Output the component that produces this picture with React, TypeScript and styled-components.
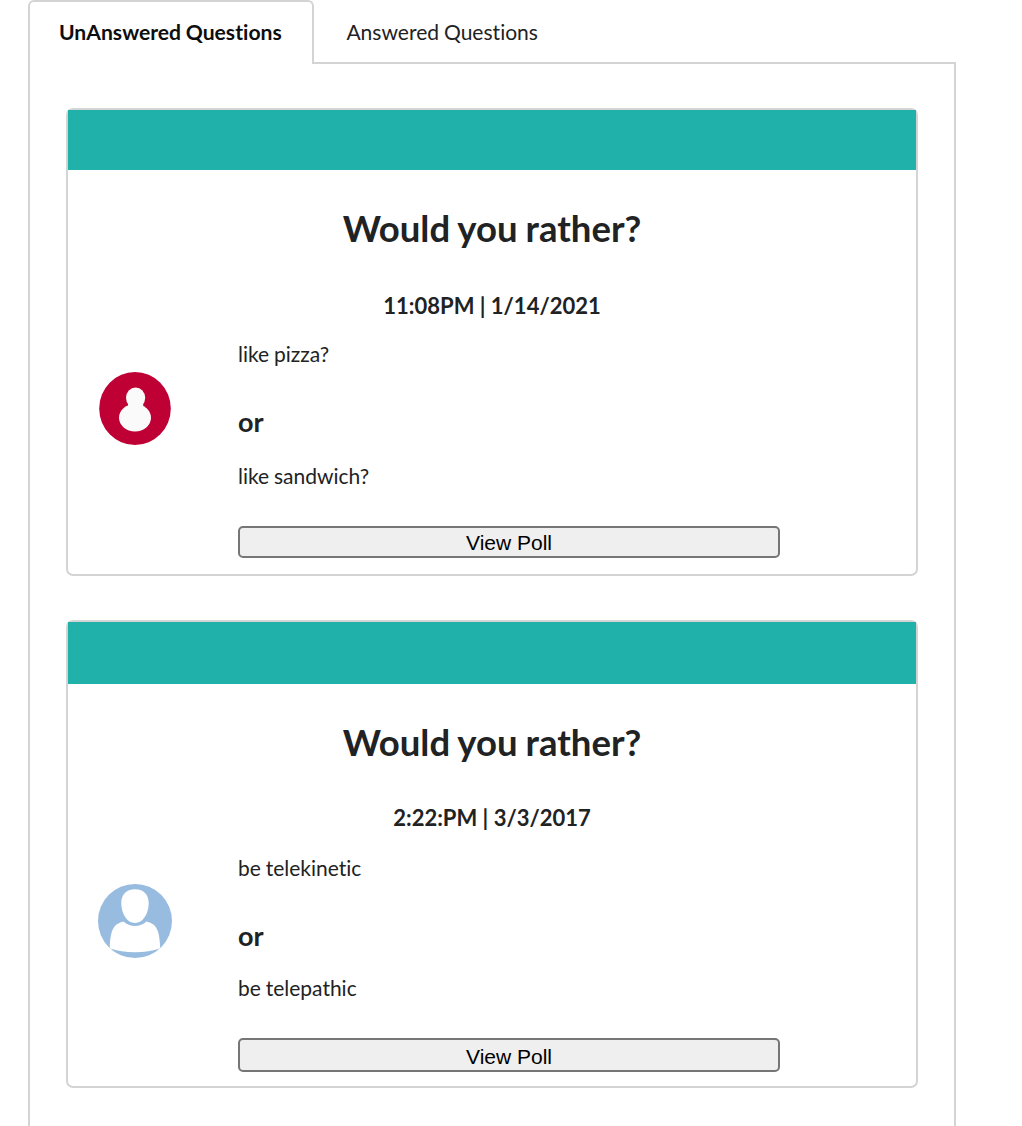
import React from "react";
import styled, { createGlobalStyle } from "styled-components";

const GlobalStyle = createGlobalStyle`
  * { box-sizing: border-box; }
  body {
    margin: 0;
    height: 1126px;
    overflow: hidden;
    background: #fff;
    color: #212223;
    font-family: Lato, "Liberation Sans", sans-serif;
    font-size: 21px;
    font-variant-ligatures: none;
    word-spacing: -0.025em;
  }
`;

const Page = styled.main`
  width: 928px;
  height: 1126px;
  margin-left: 28px;
  overflow: hidden;
`;

const TabBar = styled.nav`
  display: flex;
  height: 64px;
  border-bottom: 2px solid #d4d4d5;
`;

const Tab = styled.a<{ $active?: boolean }>`
  height: 64px;
  line-height: 30px;
  padding: ${(p) => (p.$active ? "15px 0 0 29px" : "17px 0 0 32.4px")};
  width: ${(p) => (p.$active ? "286px" : "240px")};
  white-space: nowrap;
  color: ${(p) => (p.$active ? "#0d0e0f" : "#212223")};
  font-size: ${(p) => (p.$active ? "21.15px" : "21.05px")};
  font-weight: ${(p) => (p.$active ? 700 : 400)};
  ${(p) =>
    p.$active &&
    `
    background: #fff;
    border: 2px solid #d4d4d5;
    border-bottom: 0;
    border-radius: 6px 6px 0 0;
  `}
`;

const Panel = styled.section`
  display: flex;
  flex-direction: column;
  gap: 44px;
  height: 1100px;
  padding: 44px 36px 0;
  border: 2px solid #d4d4d5;
  border-top: 0;
`;

const Card = styled.article`
  flex: none;
  height: 468px;
  border: 2px solid #d4d4d5;
  border-radius: 7px;
`;

const Banner = styled.div<{ $height: number }>`
  height: ${(p) => p.$height}px;
  background: #20b2aa;
`;

const Title = styled.h1<{ $height: number }>`
  margin: 0;
  padding-top: 36px;
  height: ${(p) => p.$height}px;
  line-height: 44px;
  font-size: 36.5px;
  word-spacing: -0.8px;
  font-weight: 700;
  text-align: center;
`;

const Timestamp = styled.h3<{ $height: number }>`
  margin: 0;
  height: ${(p) => p.$height}px;
  line-height: 36px;
  font-size: 22px;
  word-spacing: 0;
  font-weight: 700;
  text-align: center;
`;

const Body = styled.div`
  display: grid;
  grid-template-columns: 134px 542px;
  column-gap: 36px;
`;

const AvatarCell = styled.div<{ $top: number }>`
  display: flex;
  justify-content: center;
  padding-top: ${(p) => p.$top}px;
`;

const Choices = styled.div`
  display: flex;
  flex-direction: column;
`;

const Choice = styled.p<{ $height: number }>`
  margin: 0;
  height: ${(p) => p.$height}px;
  line-height: 30px;
`;

const Or = styled.h2<{ $height: number }>`
  margin: 0;
  height: ${(p) => p.$height}px;
  line-height: 34px;
  font-size: 27px;
  font-weight: 700;
`;

const PollButton = styled.button<{ $height: number }>`
  height: ${(p) => p.$height}px;
  padding: ${(p) => p.$height - 31}px 0 0;
  border: 2px solid #767676;
  border-radius: 5px;
  background: #efefef;
  color: #000;
  font: 21px/26px "Liberation Sans", Arial, sans-serif;
`;

const RedAvatar = () => (
  <svg width="74" height="74" viewBox="0 0 74 74">
    <ellipse cx="37" cy="36.5" rx="35.8" ry="36.5" fill="#be0035" />
    <ellipse cx="37.6" cy="25.8" rx="9.6" ry="10.4" fill="#fafafa" />
    <ellipse cx="37" cy="45.7" rx="16" ry="13.7" fill="#fafafa" />
    <path d="M30 32h15.2v4h-15.2z" fill="#fafafa" />
  </svg>
);

const BlueAvatar = () => (
  <svg width="74" height="74" viewBox="0 0 74 74">
    <circle cx="37" cy="37" r="37" fill="#98bcdf" />
    <path
      d="M37 5.2C46 5.2 51 10.7 50.7 19.7C50.4 29.5 45.2 39 37 39S23.6 29.5 23.3 19.7C23 10.7 28 5.2 37 5.2Z"
      fill="#fff"
    />
    <path
      d="M25.6 37.5C31.500 43.400 42.500 43.400 48.400 37.500C58 40 61.500 44.500 62.300 64.300C48 69.500 26 69.500 11.700 64.300C12.500 44.500 16 40 25.600 37.500Z"
      fill="#fff"
    />
  </svg>
);

interface Poll {
  time: string;
  first: string;
  second: string;
  banner: number;
  titleHeight: number;
  timeHeight: number;
  avatarTop: number;
  rows: [number, number, number];
  button: number;
  avatar: React.ReactNode;
}

const polls: Poll[] = [
  {
    time: "11:08PM | 1/14/2021",
    first: "like pizza?",
    second: "like sandwich?",
    banner: 60,
    titleHeight: 118,
    timeHeight: 51,
    avatarTop: 33,
    rows: [66, 56, 65],
    button: 32,
    avatar: <RedAvatar />,
  },
  {
    time: "2:22:PM | 3/3/2017",
    first: "be telekinetic",
    second: "be telepathic",
    banner: 62,
    titleHeight: 116,
    timeHeight: 53,
    avatarTop: 31,
    rows: [66, 54, 65],
    button: 34,
    avatar: <BlueAvatar />,
  },
];

export default function App() {
  return (
    <>
      <GlobalStyle />
      <Page>
        <TabBar>
          <Tab $active>UnAnswered Questions</Tab>
          <Tab>Answered Questions</Tab>
        </TabBar>
        <Panel>
          {polls.map((poll) => (
            <Card key={poll.time}>
              <Banner $height={poll.banner} />
              <Title $height={poll.titleHeight}>Would you rather?</Title>
              <Timestamp $height={poll.timeHeight}>{poll.time}</Timestamp>
              <Body>
                <AvatarCell $top={poll.avatarTop}>{poll.avatar}</AvatarCell>
                <Choices>
                  <Choice $height={poll.rows[0]}>{poll.first}</Choice>
                  <Or $height={poll.rows[1]}>or</Or>
                  <Choice $height={poll.rows[2]}>{poll.second}</Choice>
                  <PollButton $height={poll.button}>View Poll</PollButton>
                </Choices>
              </Body>
            </Card>
          ))}
        </Panel>
      </Page>
    </>
  );
}
